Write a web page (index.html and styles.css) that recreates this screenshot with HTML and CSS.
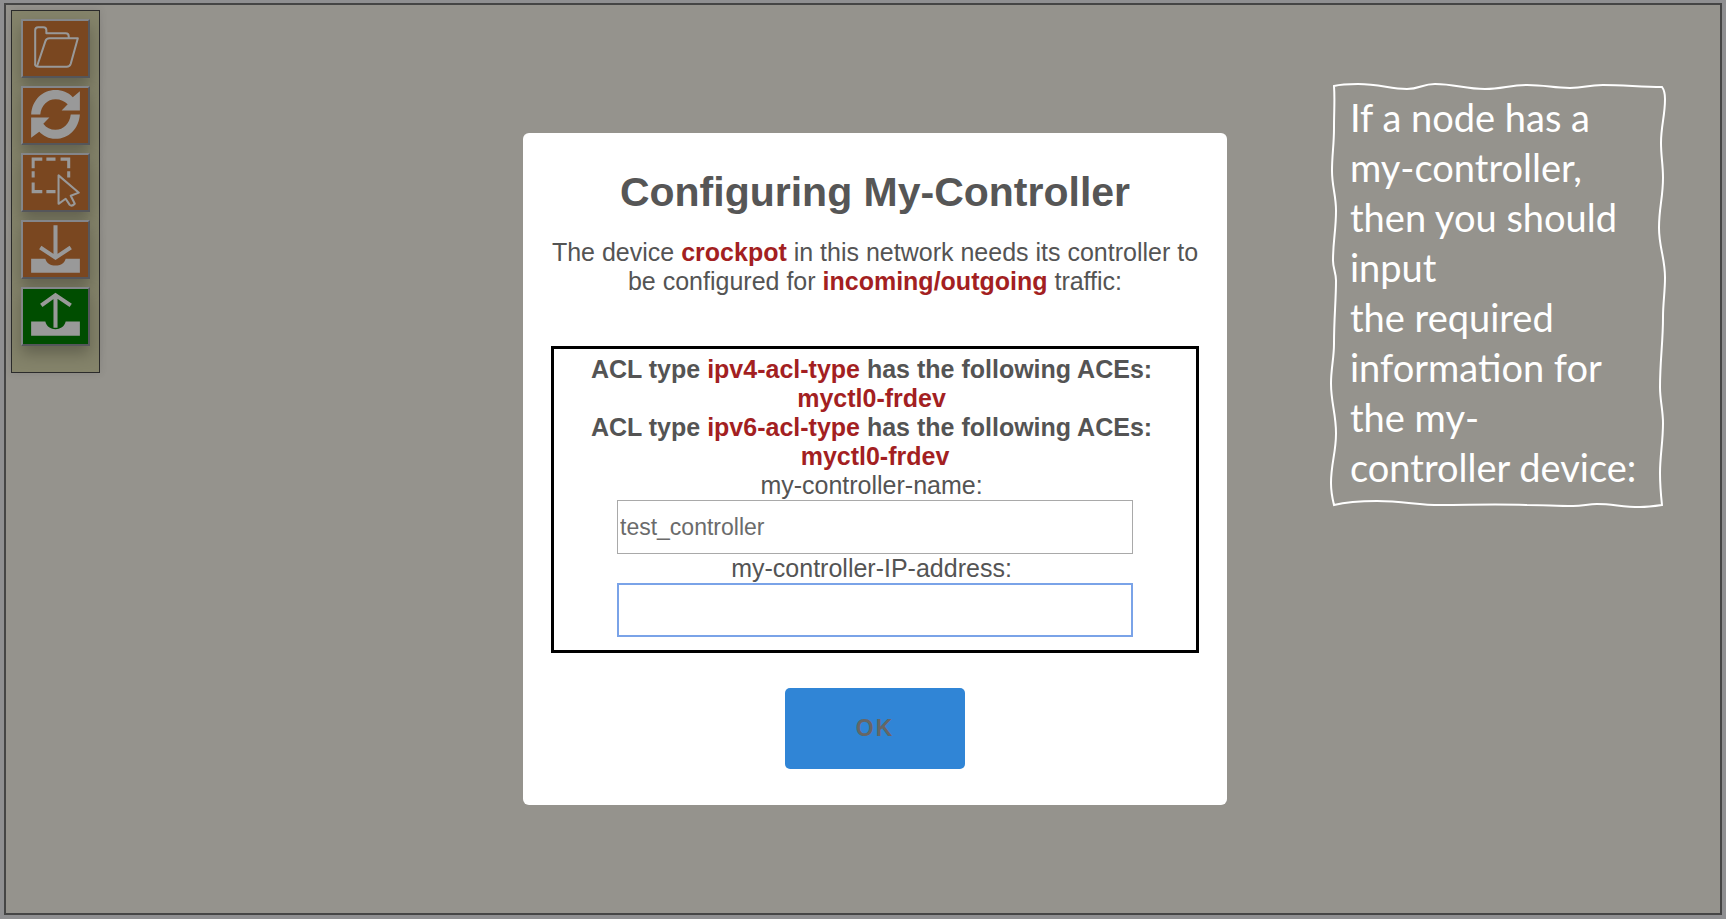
FILE: index.html
```html
<!DOCTYPE html>
<html lang="en">
<head>
<meta charset="utf-8">
<title>Configuring My-Controller</title>
<link rel="stylesheet" href="styles.css">
</head>
<body>
<main class="canvas">
  <div class="side">
    <nav class="toolbar" aria-label="Tools">
      <button class="tool" type="button" aria-label="Open">
        <svg viewBox="2 0 64 54" fill="none" stroke="currentColor" stroke-width="2" stroke-linejoin="round"><path d="M14 42V9q0-3 3-3h5q3 0 3 3v3h19q3 0 3 3v2M18 45q-5 0-4-4M16 44l8-24q1-3 4-3h28l-7 25q-1 3-4 3H18"/></svg>
      </button>
      <button class="tool" type="button" aria-label="Refresh">
        <svg viewBox="2 0 64 54" fill="currentColor"><path d="M10 26C11 12 21 2 34 2c7 0 12 2 17 7l7-6v19H40l6-6c-3-3-7-5-12-5-8 0-14 6-15 15zM58 26C57 40 47 50 34 50c-7 0-12-3-16-7l-8 6V29h18l-6 6c3 4 7 6 12 6 8 0 14-6 15-15z"/></svg>
      </button>
      <button class="tool" type="button" aria-label="Select">
        <svg viewBox="2 0 64 54" fill="none" stroke="currentColor" stroke-width="3"><path d="M12 13V4h9M25 4h9M39 4h8v9M12 16v6M47 16v6M12 27v9h9M25 36h9"/><path stroke-width="2" stroke-linejoin="round" d="M37 20v28l7-5 4 6q2 2 5-1l-4-8 8-3z"/></svg>
      </button>
      <button class="tool" type="button" aria-label="Download">
        <svg viewBox="2 0 64 54"><path fill="currentColor" d="M10 36h14c2 9 18 9 20 0h14v14H10z"/><path fill="none" stroke="currentColor" stroke-width="4" d="M34 3v32M19 25l15 10 15-10"/></svg>
      </button>
      <button class="tool tool-green" type="button" aria-label="Upload">
        <svg viewBox="2 0 64 54"><path fill="currentColor" d="M10 32h14c2 10 18 10 20 0h14v14H10z"/><path fill="none" stroke="currentColor" stroke-width="4" d="M34 38V6M20 16L34 6l15 10"/></svg>
      </button>
    </nav>
  </div>

  <form class="modal">
    <h1 class="title">Configuring My-Controller</h1>
    <p class="lead">The device <b class="hot">crockpot</b> in this network needs its controller to be configured for <b class="hot">incoming/outgoing</b> traffic:</p>
    <div class="panel">
      <p class="acl">ACL type <span class="hot">ipv4-acl-type</span> has the following ACEs:&nbsp;<br><span class="hot">myctl0-frdev</span>&nbsp;</p>
      <p class="acl">ACL type <span class="hot">ipv6-acl-type</span> has the following ACEs:&nbsp;<br><span class="hot">myctl0-frdev</span></p>
      <label for="name">my-controller-name:&nbsp;</label>
      <input class="field" id="name" type="text" value="test_controller">
      <label for="ip">my-controller-IP-address:&nbsp;</label>
      <input class="field field-active" id="ip" type="text" autofocus>
    </div>
    <button class="ok" type="button">OK</button>
  </form>

  <aside class="note">
    <svg class="note-frame" viewBox="0 0 340 430" preserveAspectRatio="none" fill="none" stroke="#fff" stroke-width="2" aria-hidden="true"><path d="M6 5C14 3 22 3 30 3C52 3 62 8 79 8C92 8 94 3 107 3C127 3 137 8 157 8C174 8 182 4 199 4C218 4 225 7 242 7C258 7 258 4 275 4C295 4 314 6 334 6C337 10 337 14 337 18C337 35 333 45 333 62C333 76 335 83 335 97C335 117 331 127 331 147C331 167 337 177 337 197C337 212 335 222 335 237C335 262 332 280 332 307C332 320 335 330 335 343C335 362 332 375 332 393C332 406 333 416 334 425C327 426 320 427 312 427C294 427 285 424 269 424C260 424 255 426 245 426C228 426 216 425 199 425C165 424 142 425 112 425C90 425 75 421 49 421C32 421 18 422 6 425C4 417 3 410 3 403C3 383 8 373 8 353C8 333 3 323 3 303C3 288 6 278 6 263C6 238 8 220 8 200C8 192 5 188 5 180C5 160 8 150 8 130C8 114 4 106 4 90C4 74 6 64 6 47C6 30 7 18 6 5Z"/></svg>
    <p class="note-text">If a node has a<br>my-controller,<br>then you should<br>input<br>the required<br>information for<br>the my-<br>controller device:</p>
  </aside>
</main>
</body>
</html>
```
FILE: styles.css
```css
* {
  box-sizing: border-box;
}

body {
  margin: 0;
  min-height: 100vh;
  display: flex;
  padding: 3px 4px 4px;
  background: #8f8f91;
  font-family: "Liberation Sans", Arial, sans-serif;
  color: #545454;
}

h1,
p {
  margin: 0;
}

.canvas {
  flex: 1;
  display: grid;
  grid-template-columns: 517fr 704fr 493fr;
  align-items: start;
  border: 2px solid #454545;
  background: #95938d;
}

.side {
  padding: 5px;
}

.toolbar {
  width: max-content;
  display: flex;
  flex-direction: column;
  gap: 8px;
  padding: 8px 9px 26px;
  border: 1px solid #2b2b2b;
  background: #84836a;
  box-shadow: 0 0 8px rgba(0, 0, 0, 0.1);
}

.tool {
  width: 69px;
  height: 59px;
  padding: 0;
  border: 2px solid;
  border-color: #84868a #55565a #55565a #84868a;
  background: #7a4720;
  color: #999;
  box-shadow: 0 8px 14px rgba(0, 0, 0, 0.25);
}

.tool svg {
  display: block;
  width: 100%;
  height: 100%;
}

.tool-green {
  background: #004d00;
}

.modal {
  margin-top: 128px;
  padding: 36px 28px;
  display: flex;
  flex-direction: column;
  align-items: center;
  border-radius: 6px;
  background: #fff;
  font-size: 25px;
  line-height: 29px;
  text-align: center;
}

.title {
  font-size: 41px;
  line-height: 46px;
  color: #565656;
}

.lead {
  margin-top: 23px;
}

.hot {
  color: #a31f22;
}

.panel {
  width: 100%;
  margin-top: 50px;
  padding: 6px 63px 13px;
  display: flex;
  flex-direction: column;
  border: 3px solid #000;
}

.acl {
  margin: 0 -40px;
  font-weight: bold;
}

.field {
  width: 100%;
  height: 54px;
  padding: 1px 2px;
  border: 1px solid #a9a9a9;
  background: #fff;
  color: #6b6b6b;
  font: 23px "Liberation Sans", Arial, sans-serif;
}

.field-active {
  border: 2px solid #7aa3e8;
  outline: 0;
}

.ok {
  width: 180px;
  height: 81px;
  margin-top: 35px;
  border: 0;
  border-radius: 5px;
  background: #3085d6;
  color: #666;
  font: bold 23px "Liberation Sans", Arial, sans-serif;
  letter-spacing: 2px;
}

.note {
  position: relative;
  justify-self: end;
  width: 340px;
  margin: 76px 52px 0 0;
  padding: 11px 0 18px 22px;
}

.note-frame {
  position: absolute;
  inset: 0;
  width: 100%;
  height: 100%;
}

.note-text {
  position: relative;
  color: #fff;
  font-family: "Ink Free", "Segoe Print", Lato, sans-serif;
  font-size: 38px;
  line-height: 50px;
  white-space: nowrap;
}
```
